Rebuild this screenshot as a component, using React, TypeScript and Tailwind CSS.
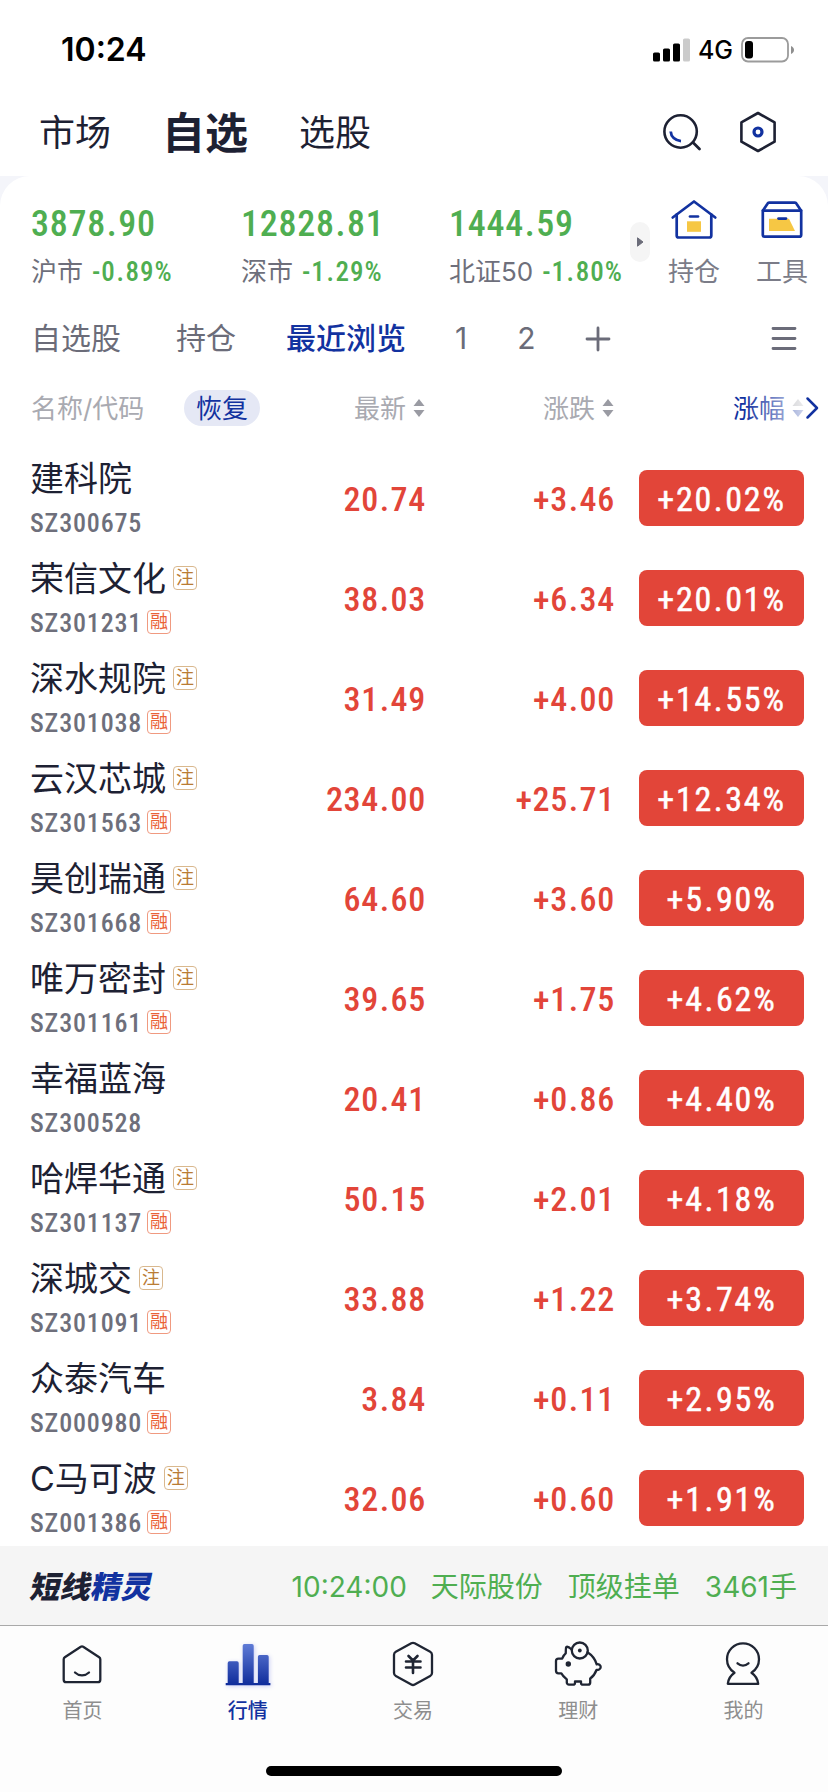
import { Fragment } from 'react';
import type { ReactNode } from 'react';
import { clsx } from 'clsx';

interface Stock {
  name: string;
  code: string;
  price: string;
  change: string;
  percent: string;
  /** Registration-based listing mark */
  reg?: boolean;
  /** Margin trading mark */
  margin?: boolean;
}

const INDICES = [
  { value: '3878.90', label: '沪市', percent: '-0.89%', width: 'w-[210px]' },
  { value: '12828.81', label: '深市', percent: '-1.29%', width: 'w-[208px]' },
  { value: '1444.59', label: '北证50', percent: '-1.80%', width: 'w-[181px]' },
];

const STOCKS: Stock[] = [
  { name: '建科院', code: 'SZ300675', price: '20.74', change: '+3.46', percent: '+20.02%' },
  { name: '荣信文化', code: 'SZ301231', price: '38.03', change: '+6.34', percent: '+20.01%', reg: true, margin: true },
  { name: '深水规院', code: 'SZ301038', price: '31.49', change: '+4.00', percent: '+14.55%', reg: true, margin: true },
  { name: '云汉芯城', code: 'SZ301563', price: '234.00', change: '+25.71', percent: '+12.34%', reg: true, margin: true },
  { name: '昊创瑞通', code: 'SZ301668', price: '64.60', change: '+3.60', percent: '+5.90%', reg: true, margin: true },
  { name: '唯万密封', code: 'SZ301161', price: '39.65', change: '+1.75', percent: '+4.62%', reg: true, margin: true },
  { name: '幸福蓝海', code: 'SZ300528', price: '20.41', change: '+0.86', percent: '+4.40%' },
  { name: '哈焊华通', code: 'SZ301137', price: '50.15', change: '+2.01', percent: '+4.18%', reg: true, margin: true },
  { name: '深城交', code: 'SZ301091', price: '33.88', change: '+1.22', percent: '+3.74%', reg: true, margin: true },
  { name: '众泰汽车', code: 'SZ000980', price: '3.84', change: '+0.11', percent: '+2.95%', margin: true },
  { name: 'C马可波', code: 'SZ001386', price: '32.06', change: '+0.60', percent: '+1.91%', reg: true, margin: true },
];

/** Narrow figures with a little air around the decimal point */
function Num({ children, className }: { children: string; className?: string }) {
  const parts = children.split('.');
  return (
    <span className={clsx("font-['Roboto',sans-serif] [font-stretch:82%] whitespace-nowrap", className)}>
      {parts.map((part, i) => (
        <Fragment key={i}>
          {i > 0 && <span className="mx-[0.02em]">.</span>}
          {part}
        </Fragment>
      ))}
    </span>
  );
}

function StatusBar() {
  return (
    <div className="flex h-[100px] items-center justify-between pr-[33px] pl-[61px]">
      <span className="text-[32px] font-semibold text-black">10:24</span>
      <div className="flex items-center">
        <svg width="38" height="24" viewBox="0 0 38 24">
          <rect x="0" y="14.5" width="7" height="9" rx="1.6" />
          <rect x="10" y="10.5" width="7" height="13" rx="1.6" />
          <rect x="20" y="5.5" width="7" height="18" rx="1.6" />
          <rect x="30" y="0.5" width="7" height="23" rx="1.6" fill="#cbcbcb" />
        </svg>
        <span className="ml-[7px] text-[25px] leading-none font-medium text-black">4G</span>
        <svg className="ml-[8px]" width="54" height="26" viewBox="0 0 54 26">
          <rect x="1" y="1" width="46" height="23.5" rx="6" fill="none" stroke="#9b9b9b" strokeWidth="1.8" />
          <rect x="4" y="4" width="8" height="17.5" rx="3" />
          <path d="M50 9c4 1.500 4 6.500 0 8z" fill="#8f8f8f" />
        </svg>
      </div>
    </div>
  );
}

function TopNav() {
  return (
    <div className="flex h-[76px] items-center pr-[50px] pb-[11px] pl-[39px] text-[36px] text-[#1d2133]">
      <span>市场</span>
      <span className="ml-[51px] text-[43px] leading-[60px] font-bold">自选</span>
      <span className="ml-[51px]">选股</span>
      <svg className="mb-[2px] ml-auto" width="44" height="44" viewBox="0 0 44 44" fill="none" strokeLinecap="round">
        <circle cx="20.600" cy="21.500" r="16.200" stroke="#1d2133" strokeWidth="2.600" />
        <path d="M33 32.500l6.500 6.500" stroke="#1d2133" strokeWidth="2.800" />
        <path d="M10.700 21.500c.3 5.200 4.300 9.200 10.300 9.600" stroke="#1232a0" strokeWidth="2.800" strokeLinecap="butt" />
      </svg>
      <svg className="mb-[2px] ml-[34px]" width="40" height="44" viewBox="0 0 40 44" fill="none">
        <path d="M20 3l16.600 9.400v19.300L20 41 3.400 31.700V12.400z" stroke="#1d2133" strokeWidth="2.600" strokeLinejoin="round" />
        <circle cx="20" cy="22" r="4" stroke="#1232a0" strokeWidth="3.200" />
      </svg>
    </div>
  );
}

function Shortcut({ label, children }: { label: string; children: ReactNode }) {
  return (
    <div className="flex w-[52px] flex-col items-center">
      {children}
      <span className="mt-[12px] text-[26px] leading-[38px] text-[#7b7c88]">{label}</span>
    </div>
  );
}

function IndexBar() {
  return (
    <div className="flex h-[125px] pt-[24px] pl-[31px]">
      {INDICES.map((item) => (
        <div key={item.label} className={clsx('flex shrink-0 flex-col', item.width)}>
          <Num className="text-[36px] leading-[48px] font-medium tracking-[0.021em] text-[#4fae51]">{item.value}</Num>
          <div className="flex items-center gap-[9px] leading-[48px] whitespace-nowrap">
            <span className="text-[26px] text-[#6e6f7b]">{item.label}</span>
            <Num className="text-[27px] font-medium tracking-[0.037em] text-[#4fae51]">{item.percent}</Num>
          </div>
        </div>
      ))}
      <div className="mt-[22px] flex h-[40px] w-[20px] shrink-0 items-center justify-center rounded-full bg-[#f5f5f5]">
        <svg width="8" height="10" viewBox="0 0 8 10">
          <path d="M1.500 .8L7 5 1.500 9.200z" fill="#6b6c79" stroke="#6b6c79" strokeLinejoin="round" />
        </svg>
      </div>
      <div className="-mt-px ml-[18px] flex gap-[36px]">
        <Shortcut label="持仓">
          <svg width="48" height="42" viewBox="0 0 48 42" fill="none" stroke="#1232a0" strokeWidth="2.700" strokeLinecap="round" strokeLinejoin="round">
            <path d="M2.700 18.500L24 2.500l21.300 16" />
            <path d="M6.700 15.500v21a2 2 0 0 0 2 2h30.600a2 2 0 0 0 2-2v-21" />
            <rect x="17" y="22.300" width="14" height="10.500" fill="#f6c744" stroke="none" />
            <path d="M20 17.500h8" />
          </svg>
        </Shortcut>
        <Shortcut label="工具">
          <svg width="44" height="42" viewBox="0 0 44 42" fill="none" stroke="#1232a0" strokeWidth="2.700" strokeLinecap="round" strokeLinejoin="round">
            <path d="M9 19.700h20L35 32H9z" fill="#f6c744" stroke="none" />
            <path d="M2.800 11.700h38.400v24a2 2 0 0 1-2 2H4.800a2 2 0 0 1-2-2z" />
            <path d="M3 11.500l4.500-6.800a2 2 0 0 1 1.600-1h25.800a2 2 0 0 1 1.600 1l4.500 6.800" />
            <path d="M18.500 19.600h7.500" />
          </svg>
        </Shortcut>
      </div>
    </div>
  );
}

function GroupTabs() {
  return (
    <div className="flex h-[75px] items-center pr-[31px] pl-[31px] text-[30px] text-[#6b6c79]">
      <span>自选股</span>
      <span className="ml-[55px]">持仓</span>
      <span className="ml-[50px] font-medium text-[#1232a0]">最近浏览</span>
      <span className="ml-[49px]">1</span>
      <span className="ml-[50px]">2</span>
      <svg className="ml-[49px]" width="26" height="26" viewBox="0 0 26 26" stroke="#6b6c79" strokeWidth="2.800" strokeLinecap="round">
        <path d="M13 2v22M2 13h22" />
      </svg>
      <svg className="ml-auto" width="26" height="26" viewBox="0 0 26 26" stroke="#6b6c79" strokeWidth="2.800" strokeLinecap="round">
        <path d="M2 2.500h22M2 12.500h22M2 22.500h22" />
      </svg>
    </div>
  );
}

function SortArrows({ down = '#9a9ba3' }: { down?: string }) {
  return (
    <svg width="12" height="18" viewBox="0 0 12 18">
      <path d="M6 0l5.500 7H.5z" fill="#9a9ba3" />
      <path d="M6 18l5.500-7H.5z" fill={down} />
    </svg>
  );
}

function ListHeader() {
  return (
    <div className="flex h-[72px] items-center pb-[8px] pl-[31px] text-[26px] text-[#a9aab1]">
      <span className="w-[153px]">名称/代码</span>
      <span className="flex h-[36px] w-[76px] items-center justify-center rounded-full bg-[#e5e8f5] text-[#1232a0]">恢复</span>
      <div className="flex w-[165px] items-center justify-end gap-[7px]">
        最新
        <SortArrows />
      </div>
      <div className="flex w-[189px] items-center justify-end gap-[7px]">
        涨跌
        <SortArrows />
      </div>
      <div className="relative flex w-[190px] items-center justify-end gap-[7px] text-[#1232a0]">
        涨幅
        <SortArrows down="#1232a0" />
        <div className="absolute inset-y-0 right-0 w-[60px] bg-gradient-to-r from-white/0 to-white/80" />
      </div>
      <svg className="ml-[1px]" width="14" height="24" viewBox="0 0 14 24" fill="none" stroke="#1232a0" strokeWidth="2.500" strokeLinecap="round" strokeLinejoin="round">
        <path d="M2.500 2.500L12 12l-9.500 9.500" />
      </svg>
    </div>
  );
}

function Mark({ className, children }: { className: string; children: ReactNode }) {
  return (
    <span className={clsx('flex h-[24px] w-[24px] items-center justify-center rounded-[4px] border text-[18px] leading-none', className)}>
      {children}
    </span>
  );
}

function StockRow({ stock }: { stock: Stock }) {
  return (
    <div className="flex h-[100px] shrink-0 items-center pl-[30px] text-[34px] text-[#e24539]">
      <div className="flex w-[214px] flex-col">
        <div className="flex h-[48px] items-center gap-[7px] text-[#1d2133]">
          <span className="pt-[2px] leading-[48px] whitespace-nowrap">{stock.name}</span>
          {stock.reg && <Mark className="border-[#d9b88e] text-[#b97c35]">注</Mark>}
        </div>
        <div className="flex h-[40px] items-center text-[#6e6f7b]">
          <Num className="w-[117px] pt-[2px] text-[26px] font-medium tracking-[0.032em]">{stock.code}</Num>
          {stock.margin && <Mark className="border-[#f09a80] text-[#ea6238]">融</Mark>}
        </div>
      </div>
      <Num className="w-[182px] pt-[2px] text-right font-medium tracking-[0.021em]">{stock.price}</Num>
      <Num className="w-[189px] pt-[2px] text-right font-medium tracking-[0.021em]">{stock.change}</Num>
      <div className="ml-[24px] flex h-[56px] w-[165px] items-center justify-center rounded-[8px] bg-[#e24539] text-white">
        <Num className="pt-[2px] tracking-[0.053em] [-webkit-text-stroke:0.5px_white]">{stock.percent}</Num>
      </div>
    </div>
  );
}

function Ticker() {
  return (
    <div className="flex h-[79px] shrink-0 items-center bg-[#f5f5f5] pt-[2px] pr-[31px] pl-[31px] text-[28px] text-[#4fae51]">
      <span className="-skew-x-12 text-[30.5px] font-black text-[#1d2133]">
        短线<span className="text-[#1232a0]">精灵</span>
      </span>
      <span className="ml-auto">10:24:00</span>
      <span className="ml-[24px]">天际股份</span>
      <span className="ml-[25px]">顶级挂单</span>
      <span className="ml-[25px]">3461手</span>
    </div>
  );
}

function TabItem({ label, active, children }: { label: string; active?: boolean; children: ReactNode }) {
  return (
    <div className="flex flex-1 flex-col items-center">
      <svg
        width="48"
        height="48"
        viewBox="0 0 48 48"
        fill="none"
        stroke="#1f2533"
        strokeWidth="2.300"
        strokeLinecap="round"
        strokeLinejoin="round"
        className="overflow-visible"
      >
        {children}
      </svg>
      <span className={clsx('mt-[8px] text-[20px] leading-[30px]', active ? 'font-medium text-[#1232a0]' : 'text-[#8e8e8e]')}>
        {label}
      </span>
    </div>
  );
}

function TabBar() {
  return (
    <div className="flex h-[167px] shrink-0 flex-col items-center justify-between border-t border-[#a9a9a9] bg-[#fdfdfd] pt-[14px] pb-[16px]">
      <div className="flex w-full pr-[2px]">
        <TabItem label="首页">
          <path d="M21.800 6.800a2.200 2.200 0 0 1 2.400 0l16 10.500a2.500 2.500 0 0 1 1.100 2v20.400a2.500 2.500 0 0 1-2.500 2.500H7.200a2.500 2.500 0 0 1-2.500-2.500V19.300a2.500 2.500 0 0 1 1.100-2z" />
          <path d="M16 32.500c4 3.800 10 3.800 14 0" />
        </TabItem>
        <TabItem label="行情" active>
          <defs>
            <linearGradient id="bars" gradientUnits="userSpaceOnUse" x1="0" y1="4" x2="0" y2="45">
              <stop offset="0" stopColor="#5f7bd6" />
              <stop offset="1" stopColor="#0f2c9b" />
            </linearGradient>
          </defs>
          <g fill="url(#bars)" stroke="none" className="drop-shadow-[1px_1px_2px_#c9cdf5]">
            <path d="M3.700 44V23a1.700 1.700 0 0 1 1.700-1.700H13a1.700 1.700 0 0 1 1.700 1.700v21z" />
            <path d="M18.700 44V5.700A1.700 1.700 0 0 1 20.400 4H28a1.700 1.700 0 0 1 1.700 1.700V44z" />
            <path d="M33.900 44V16.700a1.700 1.700 0 0 1 1.700-1.700H43a1.700 1.700 0 0 1 1.700 1.700V44z" />
            <path d="M1.700 43h44.700v2.200H1.700z" />
          </g>
        </TabItem>
        <TabItem label="交易">
          <path d="M22.300 3.300a3.500 3.500 0 0 1 3.400 0l15.500 8.400a3.500 3.500 0 0 1 1.800 3V33a3.500 3.500 0 0 1-1.800 3l-15.500 8.500a3.500 3.500 0 0 1-3.400 0L6.800 36A3.500 3.500 0 0 1 5 33V14.700a3.500 3.500 0 0 1 1.800-3z" />
          <path d="M19.500 16l4.500 4.500 4.500-4.500M17 21.500h14.500M17 27.500h14.500M24 21v12" strokeWidth="2.600" />
        </TabItem>
        <TabItem label="理财">
          <circle cx="25.800" cy="10.500" r="8" />
          <circle cx="25.800" cy="10.500" r="1.900" fill="#1f2533" stroke="none" />
          <circle cx="14.300" cy="24" r="2.700" fill="#1f2533" stroke="none" />
          <path d="M17.500 9.500c-2-2-4.500-3-5.200-2.500-.8.600-.3 4.300-.6 6.300-2 1.500-2.500 3-3.500 5.300H4.500a2.500 2.500 0 0 0-2.500 2.500v9.700a2.500 2.500 0 0 0 2.500 2.500h2.800c1.200 2.500 3 4 5.500 6v3.200a2.200 2.200 0 0 0 2.200 2.200h4a2 2 0 0 0 2-2V41.500h6v1.200a2 2 0 0 0 2 2h5a2.200 2.200 0 0 0 2.200-2.200V38.500c3-2 5-5 6.300-8.500 2 0 4.200-1.200 4.200-3s-2-3.200-4-2.700c-1.500-5-5-9.300-9.200-12" />
        </TabItem>
        <TabItem label="我的">
          <path d="M15.500 32.800C10.500 29.500 8 25 8 19.300a16 16 0 0 1 32 0c0 5.700-2.500 10.200-7.500 13.500 3.800 2.700 6.200 5.900 6.700 11H8.800c.5-5.100 2.900-8.300 6.700-11z" />
          <path d="M18.500 23.300c3.300 2.900 7.700 2.900 11 0" />
        </TabItem>
      </div>
      <div className="h-[10px] w-[296px] rounded-full bg-black" />
    </div>
  );
}

export default function App() {
  return (
    <div className="flex h-[1792px] w-[828px] flex-col overflow-hidden bg-white font-['Inter','Noto_Sans_CJK_SC',sans-serif]">
      <StatusBar />
      <TopNav />
      <div className="flex min-h-0 flex-1 flex-col bg-[#f4f5fa]">
        <div className="flex min-h-0 flex-1 flex-col overflow-hidden rounded-t-[30px] bg-white">
          <IndexBar />
          <GroupTabs />
          <ListHeader />
          <div className="flex min-h-0 flex-1 flex-col overflow-hidden">
            {STOCKS.map((stock) => (
              <StockRow key={stock.code} stock={stock} />
            ))}
          </div>
        </div>
      </div>
      <Ticker />
      <TabBar />
    </div>
  );
}
